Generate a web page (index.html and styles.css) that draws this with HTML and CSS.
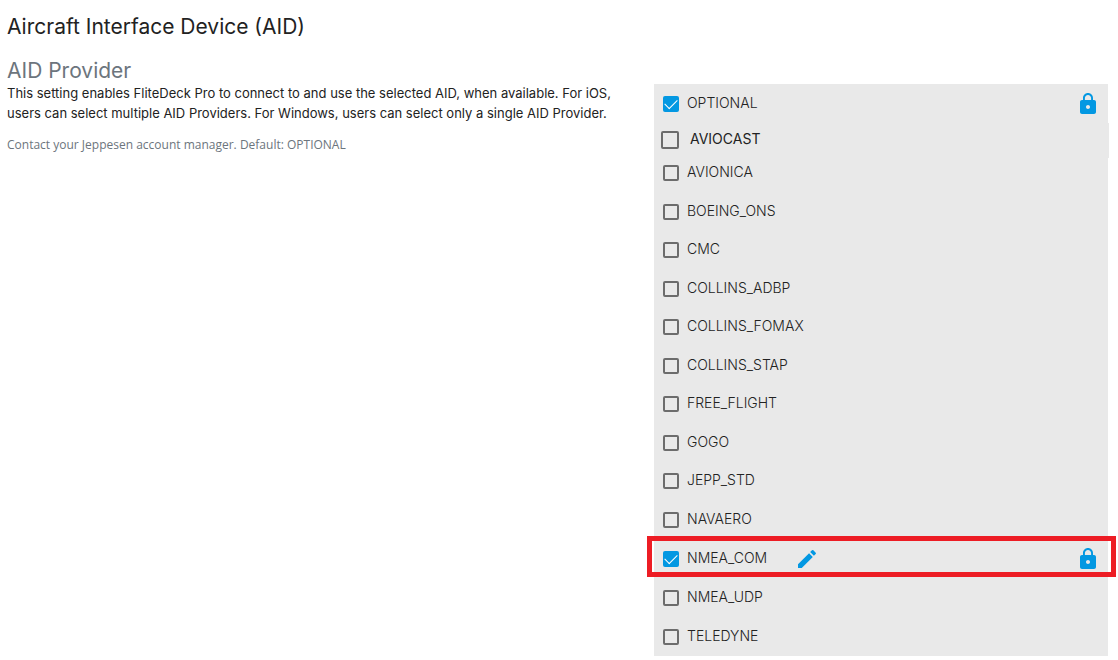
FILE: index.html
```html
<!DOCTYPE html>
<html lang="en">
<head>
<meta charset="utf-8">
<meta name="viewport" content="width=device-width, initial-scale=1">
<title>Aircraft Interface Device (AID)</title>
<link rel="stylesheet" href="styles.css">
</head>
<body>
<svg class="sprite" aria-hidden="true">
  <symbol id="lock" viewBox="0 0 24 24"><path d="M18 8h-1V6c0-2.760-2.240-5-5-5S7 3.240 7 6v2H6c-1.100 0-2 .9-2 2v10c0 1.100.9 2 2 2h12c1.100 0 2-.9 2-2V10c0-1.100-.9-2-2-2zm-6 9c-1.100 0-2-.9-2-2s.9-2 2-2 2 .9 2 2-.9 2-2 2zm3.100-9H8.900V6c0-1.710 1.390-3.100 3.100-3.100s3.100 1.390 3.100 3.100v2z"/></symbol>
  <symbol id="pencil" viewBox="0 0 24 24"><path d="M3 17.250V21h3.750L17.810 9.940l-3.750-3.750L3 17.250zM20.710 7.040c.39-.39.39-1.020 0-1.410l-2.340-2.340a1 1 0 0 0-1.410 0l-1.830 1.830 3.750 3.750 1.830-1.830z"/></symbol>
</svg>
<main class="page">
  <h1 class="title">Aircraft Interface Device (AID)</h1>
  <div class="setting">
    <section class="info">
      <h2 class="subtitle">AID Provider</h2>
      <p class="description">This setting enables FliteDeck Pro to connect to and use the selected AID, when available. For iOS,<br>users can select multiple AID Providers. For Windows, users can select only a single AID Provider.</p>
      <p class="note">Contact your Jeppesen account manager. Default: OPTIONAL</p>
    </section>
    <ul class="options">
      <li class="option"><label class="choice"><input class="tick" type="checkbox" checked>OPTIONAL</label><button class="action lock" type="button" aria-label="Lock OPTIONAL"><svg class="icon"><use href="#lock"/></svg></button></li>
      <li class="option option-large"><label class="choice"><input class="tick" type="checkbox">AVIOCAST</label></li>
      <li class="option"><label class="choice"><input class="tick" type="checkbox">AVIONICA</label></li>
      <li class="option"><label class="choice"><input class="tick" type="checkbox">BOEING_ONS</label></li>
      <li class="option"><label class="choice"><input class="tick" type="checkbox">CMC</label></li>
      <li class="option"><label class="choice"><input class="tick" type="checkbox">COLLINS_ADBP</label></li>
      <li class="option"><label class="choice"><input class="tick" type="checkbox">COLLINS_FOMAX</label></li>
      <li class="option"><label class="choice"><input class="tick" type="checkbox">COLLINS_STAP</label></li>
      <li class="option"><label class="choice"><input class="tick" type="checkbox">FREE_FLIGHT</label></li>
      <li class="option"><label class="choice"><input class="tick" type="checkbox">GOGO</label></li>
      <li class="option"><label class="choice"><input class="tick" type="checkbox">JEPP_STD</label></li>
      <li class="option option-last"><label class="choice"><input class="tick" type="checkbox">NAVAERO</label></li>
      <li class="option option-marked"><label class="choice"><input class="tick" type="checkbox" checked>NMEA_COM</label><button class="action edit" type="button" aria-label="Edit NMEA_COM"><svg class="icon"><use href="#pencil"/></svg></button><button class="action lock" type="button" aria-label="Lock NMEA_COM"><svg class="icon"><use href="#lock"/></svg></button></li>
      <li class="option option-tall"><label class="choice"><input class="tick" type="checkbox">NMEA_UDP</label></li>
      <li class="option option-tall"><label class="choice"><input class="tick" type="checkbox">TELEDYNE</label></li>
    </ul>
  </div>
</main>
</body>
</html>
```
FILE: styles.css
```css
* { box-sizing: border-box; }
body { margin: 0; background: #fff; color: #222; font-family: Inter, "Liberation Sans", sans-serif; font-weight: 400; }
.sprite { display: none; }
.page { padding: 12px 10px 4px 7px; }
.title { margin: 0; font-size: 21px; line-height: 30px; font-weight: 400; }
.setting { display: grid; grid-template-columns: 647fr 454fr; align-items: start; margin-top: 12px; }
.subtitle { margin: 0; font-size: 21px; line-height: 25px; font-weight: 400; color: #6c757d; }
.info { padding-top: 4px; }
.description { margin: 0; font-size: 13px; line-height: 20px; white-space: nowrap; }
.note { margin: 12px 0 0; font-family: "Open Sans", sans-serif; font-size: 12px; line-height: 20px; color: #6c757d; }
.options { margin: 30px 0 0; padding: 0 0 1px; list-style: none; background: #e9e9e9; font-size: 14px; font-weight: 300; }
.option { display: flex; align-items: center; position: relative; height: 40px; padding: 0 8px 0 9px; }
.option:nth-child(even) { height: 37px; }
.option:first-child,
.option.option-last { height: 38px; }
.option.option-marked,
.option.option-tall { height: 39px; }
.option.option-large { height: 30px; padding: 4px 8px 0 7px; font-weight: 400; }
.option-large::after { content: ""; position: absolute; inset: 1px -1px -6px auto; width: 1px; background: #e9e9e9; }
.choice { display: flex; align-items: center; gap: 8px; line-height: 20px; }
.tick { appearance: none; flex: none; width: 16px; height: 16px; margin: 2px 0 0; border: 2px solid #6c6c6c; border-radius: 2px; }
.tick:checked { border: 0; background: #0398e2; display: grid; place-items: center; }
.tick:checked::before { content: ""; width: 11px; height: 6px; margin-top: -3px; border: solid #fff; border-width: 0 0 1px 1px; transform: rotate(-45deg); }
.option-large .choice { gap: 11px; }
.option-large .tick { width: 18px; height: 18px; }
.action { display: grid; padding: 2px 0 0; border: 0; background: none; color: #0398e2; cursor: pointer; }
.lock { margin-left: auto; }
.edit { margin-left: 28px; }
.icon { width: 24px; height: 24px; fill: currentColor; }
.option-marked::after { content: ""; position: absolute; inset: -2px -8px 0 -7px; border: 5px solid #ed1c24; pointer-events: none; }
```
